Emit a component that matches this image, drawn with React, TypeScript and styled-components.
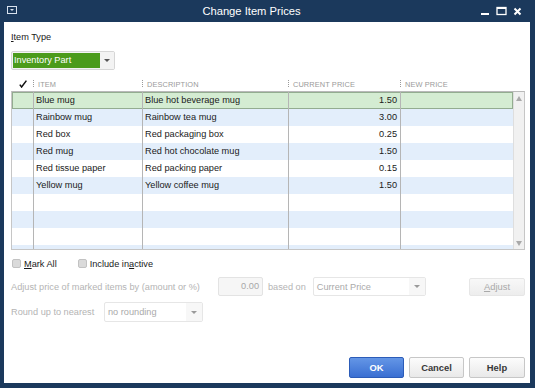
import styled, { createGlobalStyle } from "styled-components";

const GlobalStyle = createGlobalStyle`
  html, body {
    margin: 0;
    padding: 0;
  }
  body {
    font-family: "Liberation Sans", Arial, sans-serif;
    background: #1b395c;
  }
`;

const Window = styled.div`
  width: 535px;
  height: 388px;
  box-sizing: border-box;
  background: #1b395c;
  display: flex;
  flex-direction: column;
  padding: 0 5px 5px 4px;
`;

const TitleBar = styled.div`
  height: 22px;
  display: flex;
  align-items: center;
  color: #fff;
  font-size: 11.2px;
`;

const SysIcon = styled.div`
  width: 16px;
  display: flex;
  align-items: center;
  padding-left: 3px;
  margin-top: -2px;
`;

const Title = styled.div`
  flex: 1;
  text-align: center;
`;

const Controls = styled.div`
  display: flex;
  align-items: center;
  gap: 6px;
  padding-right: 8px;
`;

const Content = styled.div`
  flex: 1;
  background: #fff;
  display: flex;
  flex-direction: column;
  padding: 10px 5px 5px 7px;
  font-size: 9.2px;
  color: #1a1a1a;
`;

const Label = styled.div`
  height: 11px;
  line-height: 11px;
`;

const U = styled.span`
  text-decoration: underline;
`;

const TypeSelect = styled.div`
  margin-top: 8px;
  width: 104px;
  height: 19px;
  box-sizing: border-box;
  border: 1px solid #d6d6d6;
  border-radius: 2px;
  display: flex;
  background: #f3f3f3;
`;

const TypeValue = styled.div`
  width: 86px;
  margin: 1px 0 1px 1px;
  background: #4b9b1b;
  color: #fff;
  line-height: 15px;
  padding-left: 1px;
`;

const ArrowBox = styled.div<{ $disabled?: boolean }>`
  flex: 1;
  display: flex;
  align-items: center;
  justify-content: center;
  background: #f3f3f3;
  &::after {
    content: "";
    border-left: 3px solid transparent;
    border-right: 3px solid transparent;
    border-top: 3px solid ${(p) => (p.$disabled ? "#9a9a9a" : "#555")};
  }
`;

const cols = "21px 109px 146px 112px 113px";

const HeaderRow = styled.div`
  margin-top: 7px;
  height: 14px;
  padding-left: 1px;
  display: grid;
  grid-template-columns: ${cols};
  align-items: center;
  font-size: 7.4px;
  color: #9a9a9a;
  letter-spacing: 0.1px;
`;

const HeadCell = styled.div<{ $sep?: boolean }>`
  display: flex;
  align-items: center;
  height: 100%;
  padding-left: 5px;
  position: relative;
  &::before {
    content: "";
    display: ${(p) => (p.$sep ? "block" : "none")};
    position: absolute;
    left: 0;
    top: 3px;
    height: 7px;
    border-left: 1px dotted #9a9a9a;
  }
`;

const CheckHead = styled.div`
  display: flex;
  align-items: center;
  padding-left: 7px;
`;

const TableBox = styled.div`
  height: 159px;
  box-sizing: border-box;
  border: 1px solid #c6c6c6;
  border-top-color: #b9b9b9;
  display: flex;
  overflow: hidden;
`;

const Rows = styled.div`
  width: 501px;
  display: flex;
  flex-direction: column;
`;

const Row = styled.div<{ $bg: string; $selected?: boolean }>`
  flex: none;
  height: 17px;
  display: grid;
  grid-template-columns: ${cols};
  background: ${(p) => p.$bg};
  box-shadow: ${(p) => (p.$selected ? "inset 0 0 0 1px #93ac90" : "none")};
`;

const Cell = styled.div<{ $right?: boolean; $first?: boolean }>`
  border-left: ${(p) => (p.$first ? "none" : "1px solid #b5b5b5")};
  line-height: 17px;
  white-space: nowrap;
  overflow: hidden;
  padding: ${(p) => (p.$right ? "0 3px 0 0" : "0 0 0 2px")};
  text-align: ${(p) => (p.$right ? "right" : "left")};
`;

const ScrollBar = styled.div`
  flex: 1;
  background: #f1f1f1;
  border-left: 1px solid #dedede;
  display: flex;
  flex-direction: column;
  justify-content: space-between;
  align-items: center;
  padding: 4px 0 3px;
`;

const Tri = styled.div<{ $up?: boolean }>`
  border-left: 3px solid transparent;
  border-right: 3px solid transparent;
  ${(p) => (p.$up ? "border-bottom" : "border-top")}: 5px solid #a9a9a9;
`;

const CheckRow = styled.div`
  margin-top: 8px;
  display: flex;
  align-items: center;
  height: 11px;
  padding-left: 1px;
`;

const CheckGroup = styled.label`
  display: flex;
  align-items: center;
  gap: 3px;
  margin-right: 21px;
`;

const Box = styled.span`
  width: 9px;
  height: 9px;
  box-sizing: border-box;
  border: 1px solid #c2c2c2;
  border-radius: 2px;
  background: #dadada;
`;

const FormRow = styled.div<{ $gap: number }>`
  margin-top: ${(p) => p.$gap}px;
  display: flex;
  align-items: center;
  color: #b4b4b4;
`;

const FormLabel = styled.div<{ $w: number }>`
  width: ${(p) => p.$w}px;
  flex: none;
`;

const NumInput = styled.div`
  width: 45px;
  height: 19px;
  box-sizing: border-box;
  border: 1px solid #e3e3e3;
  border-radius: 2px;
  background: #f6f6f6;
  text-align: right;
  line-height: 17px;
  padding-right: 3px;
  color: #a8a8a8;
`;

const BasedOn = styled.div`
  margin: 0 7px 0 5px;
`;

const Select = styled.div<{ $w: number; $h: number }>`
  width: ${(p) => p.$w}px;
  height: ${(p) => p.$h}px;
  box-sizing: border-box;
  border: 1px solid #e6e6e6;
  border-radius: 2px;
  display: flex;
  background: #fff;
`;

const SelectText = styled.div`
  flex: 1;
  padding-left: 3px;
  display: flex;
  align-items: center;
  color: #aaa;
`;

const SelectArrow = styled(ArrowBox)`
  flex: none;
  width: 16px;
  background: #f7f7f7;
`;

const Button = styled.div<{ $variant?: "primary" | "disabled" }>`
  width: 56px;
  height: 21px;
  box-sizing: border-box;
  border-radius: 2px;
  display: flex;
  align-items: center;
  justify-content: center;
  font-weight: bold;
  font-size: 9.4px;
  border: 1px solid
    ${(p) =>
      p.$variant === "primary" ? "#2c5cb8" : p.$variant === "disabled" ? "#e6e6e6" : "#c7c7c7"};
  color: ${(p) =>
    p.$variant === "primary" ? "#fff" : p.$variant === "disabled" ? "#a9a9a9" : "#383838"};
  background: ${(p) =>
    p.$variant === "primary"
      ? "linear-gradient(#6496e6, #3a6fd2)"
      : p.$variant === "disabled"
      ? "linear-gradient(#f8f8f8, #ededed)"
      : "linear-gradient(#fcfcfc, #e9e9e9)"};
`;

const AdjustButton = styled(Button)`
  margin-left: auto;
  height: 18px;
  font-weight: normal;
`;

const Footer = styled.div`
  margin-top: auto;
  display: flex;
  justify-content: flex-end;
  gap: 5px;
`;

const items = [
  { name: "Blue mug", desc: "Blue hot beverage mug", price: "1.50" },
  { name: "Rainbow mug", desc: "Rainbow tea mug", price: "3.00" },
  { name: "Red box", desc: "Red packaging box", price: "0.25" },
  { name: "Red mug", desc: "Red hot chocolate mug", price: "1.50" },
  { name: "Red tissue paper", desc: "Red packing paper", price: "0.15" },
  { name: "Yellow mug", desc: "Yellow coffee mug", price: "1.50" },
];

function rowBg(i: number) {
  if (i === 0) return "#d4ecd2";
  return i % 2 === 1 ? "#e3eefb" : "#ffffff";
}

export default function App() {
  const rows = Array.from({ length: 10 }, (_, i) => items[i] ?? null);
  return (
    <>
      <GlobalStyle />
      <Window>
        <TitleBar>
          <SysIcon>
            <svg width="10" height="8" viewBox="0 0 10 8">
              <rect x="0.5" y="0.5" width="9" height="7" fill="none" stroke="#d8e2ee" />
              <path d="M3 3 L7 3 L5 5 Z" fill="#d8e2ee" />
            </svg>
          </SysIcon>
          <Title>Change Item Prices</Title>
          <Controls>
            <svg width="10" height="10" viewBox="0 0 10 10">
              <rect x="1" y="7" width="8" height="2" fill="#fff" />
            </svg>
            <svg width="11" height="10" viewBox="0 0 11 10">
              <rect x="1" y="1.5" width="9" height="7" fill="none" stroke="#fff" strokeWidth="1.3" />
              <rect x="1" y="1" width="9" height="2" fill="#fff" />
            </svg>
            <svg width="9" height="9" viewBox="0 0 9 9">
              <path d="M1.5 1.5 L7.5 7.5 M7.5 1.5 L1.5 7.5" stroke="#fff" strokeWidth="2" />
            </svg>
          </Controls>
        </TitleBar>
        <Content>
          <Label>
            <U>I</U>tem Type
          </Label>
          <TypeSelect>
            <TypeValue>Inventory Part</TypeValue>
            <ArrowBox />
          </TypeSelect>

          <HeaderRow>
            <CheckHead>
              <svg width="8" height="8" viewBox="0 0 8 8">
                <path d="M0.8 4.6 L2.6 7 L7.4 0.6" fill="none" stroke="#111" strokeWidth="1.5" />
              </svg>
            </CheckHead>
            <HeadCell $sep>ITEM</HeadCell>
            <HeadCell $sep>DESCRIPTION</HeadCell>
            <HeadCell $sep>CURRENT PRICE</HeadCell>
            <HeadCell $sep>NEW PRICE</HeadCell>
          </HeaderRow>
          <TableBox>
            <Rows>
              {rows.map((r, i) => (
                <Row key={i} $bg={rowBg(i)} $selected={i === 0}>
                  <Cell $first />
                  <Cell>{r?.name}</Cell>
                  <Cell>{r?.desc}</Cell>
                  <Cell $right>{r?.price}</Cell>
                  <Cell />
                </Row>
              ))}
            </Rows>
            <ScrollBar>
              <Tri $up />
              <Tri />
            </ScrollBar>
          </TableBox>

          <CheckRow>
            <CheckGroup>
              <Box />
              <span>
                <U>M</U>ark All
              </span>
            </CheckGroup>
            <CheckGroup>
              <Box />
              <span>
                Include in<U>a</U>ctive
              </span>
            </CheckGroup>
          </CheckRow>

          <FormRow $gap={8}>
            <FormLabel $w={207}>Adjust price of marked items by (amount or %)</FormLabel>
            <NumInput>0.00</NumInput>
            <BasedOn>based on</BasedOn>
            <Select $w={113} $h={19}>
              <SelectText>Current Price</SelectText>
              <SelectArrow $disabled />
            </Select>
            <AdjustButton $variant="disabled">
              <span>
                <U>A</U>djust
              </span>
            </AdjustButton>
          </FormRow>
          <FormRow $gap={6}>
            <FormLabel $w={93}>Round up to nearest</FormLabel>
            <Select $w={99} $h={20}>
              <SelectText>no rounding</SelectText>
              <SelectArrow $disabled />
            </Select>
          </FormRow>

          <Footer>
            <Button $variant="primary" style={{ width: 55 }}>OK</Button>
            <Button style={{ width: 55 }}>Cancel</Button>
            <Button>Help</Button>
          </Footer>
        </Content>
      </Window>
    </>
  );
}
